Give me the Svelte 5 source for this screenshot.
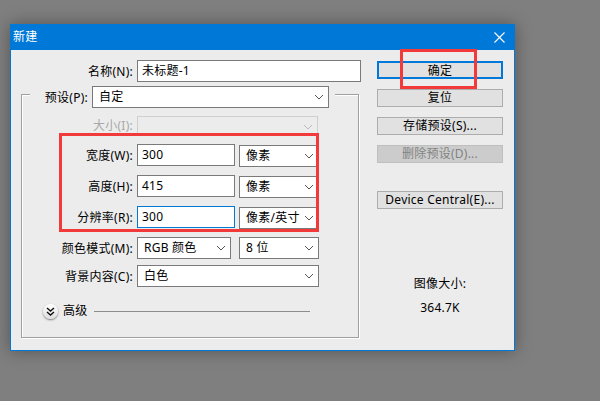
<script>
  const title = "新建";
</script>

{#snippet chevron()}
  <svg class="chev" width="10" height="6" viewBox="0 0 10 6"><path d="M1 1l4 4 4-4" fill="none" stroke="currentColor" stroke-width="1" /></svg>
{/snippet}

{#snippet select(text, cls)}
  <div class="select {cls}"><span>{text}</span>{@render chevron()}</div>
{/snippet}

<div class="desktop">
  <div class="dialog">
    <header class="titlebar">
      <span>{title}</span>
      <svg class="close" width="11" height="11" viewBox="0 0 11 11"><path d="M.5.5l10 10M10.5.5l-10 10" stroke="#fff" stroke-width="1.1" fill="none" /></svg>
    </header>

    <div class="body">
      <div class="left">
        <div class="row name">
          <label for="n">名称(N):</label>
          <div class="input wide" id="n">未标题-1</div>
        </div>

        <div class="group">
          <div class="row preset">
            <label for="p">预设(P):</label>
            {@render select("自定", "preset-sel")}
          </div>

          <div class="row size">
            <label class="off" for="s">大小(I):</label>
            <div class="select disabled size-sel"><span></span>{@render chevron()}</div>
          </div>

          <div class="row">
            <label for="w">宽度(W):</label>
            <div class="input num" id="w">300</div>
            {@render select("像素", "unit")}
          </div>
          <div class="row">
            <label for="h">高度(H):</label>
            <div class="input num" id="h">415</div>
            {@render select("像素", "unit")}
          </div>
          <div class="row">
            <label for="r">分辨率(R):</label>
            <div class="input num focus" id="r">300</div>
            {@render select("像素/英寸", "unit")}
          </div>
          <div class="row">
            <label for="m">颜色模式(M):</label>
            {@render select("RGB 颜色", "mode")}
            {@render select("8 位", "depth")}
          </div>
          <div class="row bg">
            <label for="c">背景内容(C):</label>
            {@render select("白色", "bg-sel")}
          </div>

          <div class="advanced">
            <div class="round">
              <svg width="9" height="9" viewBox="0 0 9 9"><path d="M1 1l3.5 3L8 1M1 5l3.5 3L8 5" fill="none" stroke="#111" stroke-width="1.4" /></svg>
            </div>
            <span>高级</span>
            <div class="rule"></div>
          </div>
        </div>
      </div>

      <div class="right">
        <button class="primary">确定</button>
        <button>复位</button>
        <button>存储预设(S)...</button>
        <button class="dim" disabled>删除预设(D)...</button>
        <button class="device">Device Central(E)...</button>
        <div class="info">
          <p>图像大小:</p>
          <p>364.7K</p>
        </div>
      </div>
    </div>

    <div class="mark mark-ok"></div>
    <div class="mark mark-fields"></div>
  </div>
</div>

<style>
  :global(body) {
    background: #7f7f7f;
  }

  .desktop {
    height: 401px;
    padding: 24px 0 0 10px;
    box-sizing: border-box;
    background: #7f7f7f;
    overflow: hidden;
    font: 12px/16px "Noto Sans", "Noto Sans CJK SC", sans-serif;
    letter-spacing: 0.25px;
    color: #000;
  }

  .dialog {
    position: relative;
    width: 505px;
    height: 327px;
    box-sizing: border-box;
    background: #ececec;
    border: 1px solid #0078d7;
    border-top: 0;
    box-shadow: 0 0 16px rgba(0, 0, 0, 0.35);
  }

  .titlebar {
    height: 26px;
    padding: 0 9px 0 2px;
    display: flex;
    align-items: center;
    justify-content: space-between;
    background: #0078d7;
    color: #fff;
  }

  .body {
    display: flex;
    padding: 10px 0 0 10px;
    gap: 18px;
  }

  .left {
    width: 338px;
    flex: none;
  }

  .row {
    display: flex;
    gap: 4px;
    align-items: flex-start;
  }

  label {
    flex: none;
    width: 112px;
    height: 22px;
    line-height: 23px;
    text-align: right;
    white-space: nowrap;
  }

  .input {
    flex: none;
    height: 22px;
    line-height: 20px;
    padding-left: 4px;
    box-sizing: border-box;
    background: #fff;
    border: 1px solid #7a7a7a;
  }

  .wide {
    width: 224px;
  }

  .num {
    width: 98px;
  }

  .focus {
    border-color: #0078d7;
  }

  .select {
    flex: none;
    position: relative;
    height: 22px;
    line-height: 20px;
    padding-left: 6px;
    box-sizing: border-box;
    background: #fff;
    border: 1px solid #7a7a7a;
    white-space: nowrap;
  }

  .chev {
    position: absolute;
    right: 4px;
    top: 7px;
    color: #555;
  }

  .disabled {
    background: #ececec;
    border-color: #cfcfcf;
  }

  .disabled .chev {
    color: #bbb;
  }

  .group {
    display: flex;
    flex-direction: column;
    gap: 8px;
    height: 244px;
    margin-top: 12px;
    box-sizing: border-box;
    border: 1px solid #a0a0a0;
    box-shadow: 1px 1px 0 #fff, inset 1px 1px 0 #fff;
  }

  .group label {
    width: 111px;
  }

  .preset {
    align-self: flex-start;
    margin: -9px 0 0 8px;
    padding-right: 6px;
    background: #ececec;
  }

  .preset label {
    width: 58px;
  }

  .preset-sel {
    width: 237px;
  }

  .size {
    height: 20px;
  }

  .off {
    color: #a8a8a8;
    height: 20px;
    line-height: 20px;
  }

  .size-sel {
    width: 181px;
    height: 20px;
  }

  .unit {
    width: 80px;
    margin-top: 1px;
  }

  .mode {
    width: 94px;
  }

  .depth {
    width: 80px;
    margin-left: 4px;
  }

  .bg {
    margin-top: -2px;
  }

  .bg-sel {
    width: 182px;
  }

  .advanced {
    display: flex;
    align-items: center;
    margin: 8px 0 0 21px;
  }

  .round {
    width: 15px;
    height: 15px;
    display: grid;
    place-items: center;
    border-radius: 50%;
    background: linear-gradient(#fff, #ddd);
    box-shadow: 0 1px 2px rgba(0, 0, 0, 0.5);
  }

  .advanced span {
    margin: 0 6px 0 5px;
  }

  .rule {
    width: 216px;
    height: 1px;
    background: #8c8c8c;
  }

  .right {
    width: 126px;
    padding-top: 1px;
    display: flex;
    flex-direction: column;
    gap: 10px;
  }

  button {
    height: 18px;
    padding: 0;
    box-sizing: border-box;
    background: #e1e1e1;
    border: 1px solid #adadad;
    font: inherit;
    letter-spacing: inherit;
    line-height: 16px;
    color: #000;
  }

  .primary {
    border: 2px solid #0078d7;
  }

  .dim {
    background: #ccc;
    border-color: #bfbfbf;
    color: #838383;
  }

  .device {
    margin-top: 18px;
  }

  .info {
    margin-top: 57px;
    display: flex;
    flex-direction: column;
    gap: 8px;
    text-align: center;
  }

  .info p {
    margin: 0;
  }

  /* red annotation boxes drawn over the screenshot */
  .mark {
    position: absolute;
    box-sizing: border-box;
    border: 3px solid #f33a3a;
  }

  .mark-ok {
    left: 389px;
    top: 25px;
    width: 77px;
    height: 40px;
  }

  .mark-fields {
    left: 48px;
    top: 109px;
    width: 260px;
    height: 99px;
  }
</style>
